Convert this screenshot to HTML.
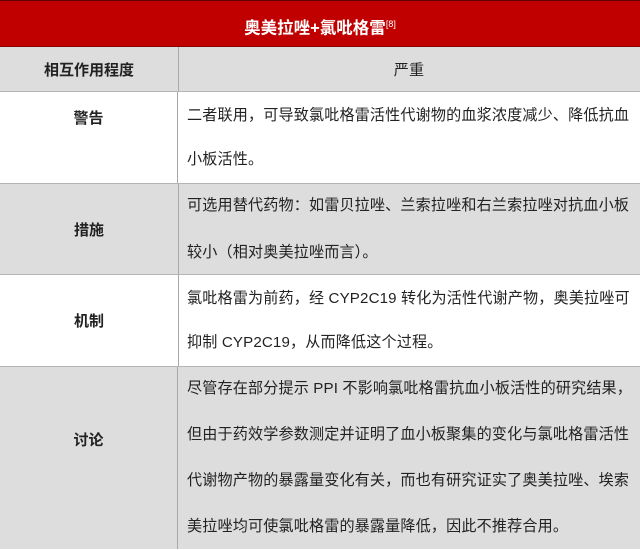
<!DOCTYPE html>
<html><head><meta charset="utf-8"><style>
body{margin:0;width:640px;height:549px;overflow:hidden;background:#fff;font-family:"Liberation Sans","Noto Sans CJK SC",sans-serif;color:#222}
.r{position:absolute;left:0;width:640px;border-bottom:1px solid #b5b5b5;box-sizing:border-box}
.g{background:#dddddd}
.l{position:absolute;left:0;top:0;bottom:0;width:178px;border-right:1px solid #a8a8a8;display:flex;align-items:center;justify-content:center;font-weight:bold;font-size:15px}
.t{position:absolute;left:187px;right:0;top:0;bottom:0;display:flex;flex-direction:column;justify-content:center;font-size:15.1px;letter-spacing:0.15px;white-space:nowrap}
.t div{height:44px;line-height:44px}
</style></head><body>
<div class="r" style="top:0;height:47px;background:#c00000;border-top:1px solid #600000;border-bottom:1px solid #8a0000;color:#fff;font-weight:bold;font-size:16.5px;text-align:center;line-height:46px">奥美拉唑+氯吡格雷<sup style="font-size:9px;font-weight:normal">[8]</sup></div>
<div class="r g" style="top:47px;height:45px"><div class="l">相互作用程度</div><div class="t" style="left:178px;right:0;align-items:center">严重</div></div>
<div class="r" style="top:92px;height:92px"><div class="l" style="align-items:flex-start;padding-top:15px;box-sizing:border-box">警告</div><div class="t"><div>二者联用，可导致氯吡格雷活性代谢物的血浆浓度减少、降低抗血</div><div>小板活性。</div></div></div>
<div class="r g" style="top:184px;height:91px"><div class="l">措施</div><div class="t"><div style="height:47px;line-height:47px">可选用替代药物：如雷贝拉唑、兰索拉唑和右兰索拉唑对抗血小板</div><div style="height:47px;line-height:47px">较小（相对奥美拉唑而言）。</div></div></div>
<div class="r" style="top:275px;height:92px"><div class="l">机制</div><div class="t"><div>氯吡格雷为前药，经 CYP2C19 转化为活性代谢产物，奥美拉唑可</div><div>抑制 CYP2C19，从而降低这个过程。</div></div></div>
<div class="r g" style="top:367px;height:182px;border-bottom:none"><div class="l" style="padding-bottom:38px;box-sizing:border-box">讨论</div><div class="t"><div style="height:46px;line-height:46px">尽管存在部分提示 PPI 不影响氯吡格雷抗血小板活性的研究结果，</div><div style="height:46px;line-height:46px">但由于药效学参数测定并证明了血小板聚集的变化与氯吡格雷活性</div><div style="height:46px;line-height:46px">代谢物产物的暴露量变化有关，而也有研究证实了奥美拉唑、埃索</div><div style="height:46px;line-height:46px">美拉唑均可使氯吡格雷的暴露量降低，因此不推荐合用。</div></div></div>
</body></html>
